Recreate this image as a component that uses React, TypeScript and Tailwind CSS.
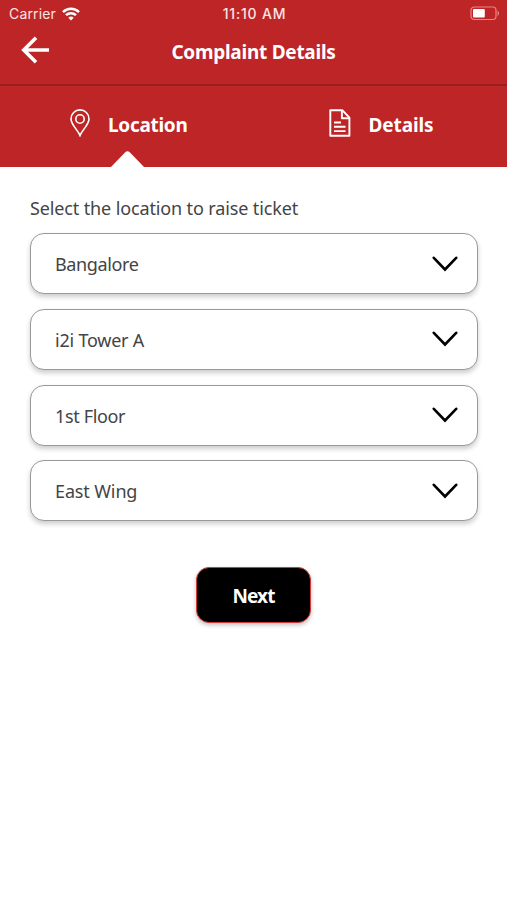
const locations = [
  { label: 'Bangalore', tracking: 'tracking-[-0.38px]' },
  { label: 'i2i Tower A', tracking: 'tracking-[-0.22px]' },
  { label: '1st Floor', tracking: 'tracking-[-0.36px]' },
  { label: 'East Wing', tracking: 'tracking-[-0.13px]' },
];

function StatusBar() {
  return (
    <div className="grid h-[27px] grid-cols-3 items-center pl-[9px] pr-[7px] font-['Inter',sans-serif] text-[14px] leading-none text-[#fbe4e2]">
      <div className="flex items-center gap-[6px]">
        <span className="tracking-[0.15px]">Carrier</span>
        <svg width="18" height="14" viewBox="0 0 18 14" fill="none" stroke="#fff" strokeWidth="2.5">
          <path d="M1 5.1a11.3 11.3 0 0 1 16 0" />
          <path d="M4 8.2a7.1 7.1 0 0 1 10 0" />
          <path d="M9 13.5 6.3 10.8a3.9 3.9 0 0 1 5.4 0Z" fill="#fff" stroke="none" />
        </svg>
      </div>
      <span className="whitespace-nowrap text-center font-medium tracking-[0.8px]">11:10 AM</span>
      <svg className="justify-self-end" width="30" height="15" viewBox="0 0 30 15" fill="none">
        <rect x="1" y="1" width="25" height="12.5" rx="3.2" stroke="#e88783" strokeWidth="1.2" />
        <rect x="3" y="3" width="11.8" height="8.5" rx="1" fill="#fff" />
        <path d="M27.5 4.8c2 .6 2 4.4 0 5Z" fill="#e88783" />
      </svg>
    </div>
  );
}

function PinIcon() {
  return (
    <svg width="20" height="28" viewBox="0 0 20 28" fill="none" stroke="#fff" strokeWidth="1.6">
      <path d="M10 26.5C8.2 21.5 1 15.6 1 9.9a9 9 0 0 1 18 0c0 5.7-7.2 11.6-9 16.6Z" />
      <circle cx="10" cy="10" r="4.2" />
    </svg>
  );
}

function FileIcon() {
  return (
    <svg width="22" height="28" viewBox="0 0 22 28" fill="none" stroke="#fff" strokeWidth="1.9" strokeLinejoin="round">
      <path d="M1.3 1.3h12.2l6.9 7.3v18.1H1.3Z" />
      <path d="M12.9 1.5v7.7h7.2M5 13.5h7M5 17.8h11.5M5 22.1h11.5" />
    </svg>
  );
}

function Header() {
  return (
    <header className="h-[167px] bg-[#be2527] text-white">
      <StatusBar />
      <div className="grid h-[59px] grid-cols-[1fr_auto_1fr] items-center border-b-2 border-[#981e20] pb-[7px]">
        <button aria-label="Back" className="ml-[21px] mt-[-4px] w-7">
          <svg width="28" height="28" viewBox="0 0 28 28" fill="none" stroke="#fff" strokeWidth="3.6">
            <path d="M15 1.8 2.8 14 15 26.2M3 14h25" />
          </svg>
        </button>
        <h1 className="whitespace-nowrap text-[19px] leading-6 font-bold tracking-[-0.26px]">Complaint Details</h1>
      </div>
      <nav className="grid h-[81px] grid-cols-2">
        <button className="relative flex items-start pl-[70px] pt-[23px]">
          <PinIcon />
          <span className="ml-[18px] mt-[4px] text-[19px] leading-6 font-bold tracking-[-0.3px]">Location</span>
          <svg className="absolute bottom-0 left-[111px]" width="33" height="16" viewBox="0 0 33 16">
            <path d="M0 16 14 1.5q2.5-2.5 5 0L33 16Z" fill="#fff" />
          </svg>
        </button>
        <button className="flex items-start pl-[75px] pt-[23px]">
          <FileIcon />
          <span className="ml-[18px] mt-[4px] text-[19px] leading-6 font-bold tracking-[-0.1px]">Details</span>
        </button>
      </nav>
    </header>
  );
}

export default function App() {
  return (
    <div className="min-h-[900px] w-full bg-white font-['Noto_Sans',sans-serif]">
      <Header />
      <main className="px-[30px] pt-[29px]">
        <p className="whitespace-nowrap text-[18px] leading-6 tracking-[-0.13px] text-[#444]">Select the location to raise ticket</p>
        <div className="mt-[13px] flex flex-col gap-[14.8px]">
          {locations.map(({ label, tracking }) => (
            <button
              key={label}
              className="flex h-[61px] w-[448px] items-center justify-between rounded-[14px] border-[1.5px] border-[#999] bg-white pl-[24px] pr-[19px] text-[18px] text-[#444] shadow-[0_3px_5px_rgba(0,0,0,0.2)]"
            >
              <span className={`pt-[2px] ${tracking}`}>{label}</span>
              <svg width="26" height="16" viewBox="0 0 26 16" fill="none" stroke="#000" strokeWidth="2.6" strokeLinecap="round">
                <path d="m1.8 1.8 11.2 11.7 11.2-11.7" />
              </svg>
            </button>
          ))}
        </div>
        <button className="mx-auto mt-[45.6px] block h-[56px] w-[115px] rounded-[13px] border-[1.5px] border-[#d5393b] bg-black pt-[2px] text-[19px] font-bold tracking-[-0.9px] text-white shadow-[0_2px_4px_rgba(0,0,0,0.25)]">
          Next
        </button>
      </main>
    </div>
  );
}
